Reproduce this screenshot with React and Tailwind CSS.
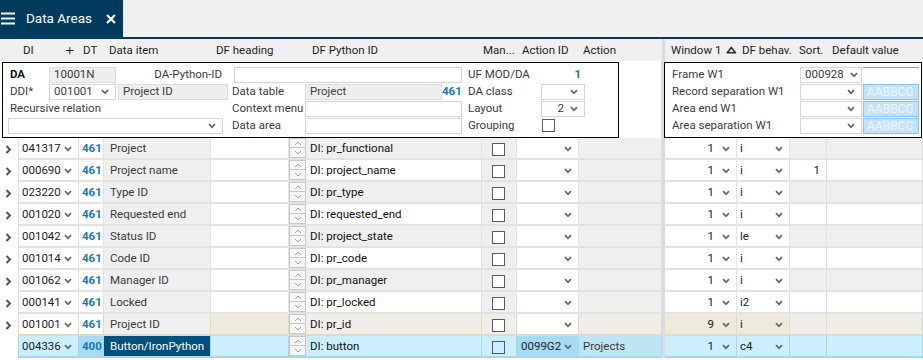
import React from 'react';

const cols = 'grid grid-cols-[18px_61px_25px_107px_78px_17px_176px_35px_62px_83px_3px_72px_53px_37px_96px]';

const rows = [
  { di: '041317', dt: '461', item: 'Project', py: 'DI: pr_functional', win: '1', beh: 'i' },
  { di: '000690', dt: '461', item: 'Project name', py: 'DI: project_name', win: '1', beh: 'i', sort: '1' },
  { di: '023220', dt: '461', item: 'Type ID', py: 'DI: pr_type', win: '1', beh: 'i' },
  { di: '001020', dt: '461', item: 'Requested end', py: 'DI: requested_end', win: '1', beh: 'i' },
  { di: '001042', dt: '461', item: 'Status ID', py: 'DI: project_state', win: '1', beh: 'le' },
  { di: '001014', dt: '461', item: 'Code ID', py: 'DI: pr_code', win: '1', beh: 'i' },
  { di: '001062', dt: '461', item: 'Manager ID', py: 'DI: pr_manager', win: '1', beh: 'i' },
  { di: '000141', dt: '461', item: 'Locked', py: 'DI: pr_locked', win: '1', beh: 'i2' },
  { di: '001001', dt: '461', item: 'Project ID', py: 'DI: pr_id', win: '9', beh: 'i', tone: 'beige' },
  { di: '004336', dt: '400', item: 'Button/IronPython', py: 'DI: button', actId: '0099G2', action: 'Projects', win: '1', beh: 'c4', tone: 'sel' },
];

const ChevronDown = () => (
  <svg width="8" height="6" viewBox="0 0 8 6" className="shrink-0">
    <path d="M1 1.2L4 4.3L7 1.2" fill="none" stroke="#666" strokeWidth="1.8" />
  </svg>
);

const RowArrow = () => (
  <svg width="7" height="9" viewBox="0 0 7 9">
    <path d="M1.5 1L5 4.5L1.5 8" fill="none" stroke="#555" strokeWidth="2" />
  </svg>
);

const Checkbox = ({ sel }) => (
  <div className={`w-[13px] h-[13px] border border-[#5a5a5a] ${sel ? 'bg-[#ccefff]' : 'bg-white'}`} />
);

const Spinner = ({ line }) => (
  <div className={`h-[22px] flex flex-col border-b-2 ${line}`}>
    <div className="h-[10px] border border-[#c9c9c9] bg-[#f6f6f6] flex items-center justify-center">
      <svg width="8" height="5" viewBox="0 0 8 5"><path d="M1 4L4 1L7 4" fill="none" stroke="#a8a8a8" strokeWidth="1" /></svg>
    </div>
    <div className="h-[10px] border border-t-0 border-[#c9c9c9] bg-[#f6f6f6] flex items-center justify-center">
      <svg width="8" height="5" viewBox="0 0 8 5"><path d="M1 1L4 4L7 1" fill="none" stroke="#a8a8a8" strokeWidth="1" /></svg>
    </div>
  </div>
);

function DataRow({ r, i }) {
  const sel = r.tone === 'sel';
  const beige = r.tone === 'beige';
  const line = sel ? 'border-[#a9d6ec]' : beige ? 'border-[#e3dbbd]' : 'border-[#e2e2e2]';
  const white = sel ? 'bg-[#ccefff]' : 'bg-white';
  const gray = sel ? 'bg-[#ccefff]' : beige ? 'bg-[#efeee8]' : 'bg-[#efefef]';
  const alt = i % 2 === 0 ? gray : white;
  const warm = sel ? 'bg-[#ccefff]' : beige ? 'bg-[#efebdc]' : 'bg-white';
  const dark = sel ? 'bg-[#a6dcf6]' : 'bg-white';
  const cell = `h-[22px] pt-[2px] flex items-center border-r border-b-2 ${line}`;

  return (
    <div className={cols}>
      <div className="h-[22px] pt-[1px] flex items-center pl-[5px]">{!sel && <RowArrow />}</div>
      <div className={`${cell} border-l ${white} pl-[3px] pr-[6px] justify-between`}>
        <span>{r.di}</span>
        <ChevronDown />
      </div>
      <div className={`${cell} ${dark} pl-[3px] font-bold text-[#1777b5]`}>{r.dt}</div>
      <div className={`${cell} ${sel ? 'bg-[#004f7c] text-white' : 'bg-[#efefef] text-[#3a3a3a]'} pl-[6px]`}>{r.item}</div>
      <div className={`${cell} ${warm}`} />
      <Spinner line={line} />
      <div className={`${cell} ${alt} pl-[4px] text-[#111]`}>{r.py}</div>
      <div className={`${cell} ${gray} pl-[10px]`}>
        <Checkbox sel={sel} />
      </div>
      <div className={`${cell} ${dark} pl-[4px] pr-[6px] justify-between`}>
        <span>{r.actId || ''}</span>
        <ChevronDown />
      </div>
      <div className={`${cell} ${sel ? 'bg-[#bde5f4]' : gray} pl-[4px] text-[#3a3a3a]`}>{r.action || ''}</div>
      <div className="h-[22px] bg-[#dedae2]" />
      <div className={`${cell} ${warm} justify-end pr-[6px] gap-[8px]`}>
        <span>{r.win}</span>
        <ChevronDown />
      </div>
      <div className={`${cell} ${warm} pl-[3px] pr-[6px] justify-between`}>
        <span>{r.beh}</span>
        <ChevronDown />
      </div>
      <div className={`${cell} ${alt} justify-end pr-[6px]`}>{r.sort || ''}</div>
      <div className={`${cell} ${alt}`} />
    </div>
  );
}

const Field = ({ w, gray, children, className = '' }) => (
  <div className={`${w} h-[16px] flex items-center px-[4px] border ${gray ? 'bg-[#eeeeee] border-[#dedede]' : 'bg-white border-[#d6d6d6]'} ${className}`}>
    {children}
  </div>
);

const Select = ({ w, value, right, className = '' }) => (
  <div className={`${w} h-[16px] flex items-center pl-[4px] pr-[6px] gap-[6px] border border-[#d6d6d6] bg-white ${className}`}>
    <span className={right ? 'ml-auto' : 'flex-1'}>{value}</span>
    <ChevronDown />
  </div>
);

const Swatch = () => (
  <div className="ml-[1px] w-[56px] h-[16px] flex items-center pl-[3px] bg-[#c3e3fb] border border-[#86c3ee] text-[#eef7ff] text-[12px]">AABBCC</div>
);

export default function App() {
  return (
    <div className="w-[923px] h-[360px] overflow-hidden bg-white text-[11.5px] text-[#222] font-['Roboto','Liberation_Sans',sans-serif]">
      {/* tab bar */}
      <div className="flex h-[37px] bg-[#f0f0f0]">
        <div className="flex items-center w-[123px] bg-[#003a5c] text-white">
          <svg width="15" height="13" viewBox="0 0 15 13" className="ml-[1px]">
            <path d="M0 1.5H14M0 6.5H14M0 11.5H14" stroke="#fff" strokeWidth="2" />
          </svg>
          <span className="ml-[10px] text-[13.5px]">Data Areas</span>
          <svg width="10" height="10" viewBox="0 0 10 10" className="ml-[14px]">
            <path d="M1 1L9 9M9 1L1 9" stroke="#fff" strokeWidth="2.2" />
          </svg>
        </div>
      </div>
      <div className="h-[2px] bg-[#003a5c]" />

      {/* column header */}
      <div className={`${cols} h-[22px] bg-[#f0f0f0] text-[#1e1e1e] whitespace-nowrap`}>
        <div />
        <div className="flex items-center pl-[5px]">
          DI<span className="ml-auto mr-[5px] text-[15px] font-light">+</span>
        </div>
        <div className="flex items-center pl-[4px]">DT</div>
        <div className="flex items-center pl-[5px]">Data item</div>
        <div className="flex items-center pl-[5px]">DF heading</div>
        <div />
        <div className="flex items-center pl-[6px]">DF Python ID</div>
        <div className="flex items-center pl-[1px]">Man...</div>
        <div className="flex items-center pl-[5px]">Action ID</div>
        <div className="flex items-center pl-[4px]">Action</div>
        <div className="bg-[#dedae2]" />
        <div className="flex items-center pl-[6px] gap-[5px]">
          Window 1
          <svg width="11" height="8" viewBox="0 0 11 8">
            <path d="M1.2 6.8L5.5 1.3L9.8 6.8Z" fill="#d8d8d8" stroke="#2a2a2a" strokeWidth="1.6" strokeLinejoin="round" />
          </svg>
        </div>
        <div className="flex items-center pl-[5px]">DF behav.</div>
        <div className="flex items-center pl-[9px]">Sort.</div>
        <div className="flex items-center pl-[5px]">Default value</div>
      </div>

      {/* detail panel */}
      <div className="flex items-start h-[77px] text-[#3c3c3c] whitespace-nowrap">
        <div className="ml-[2px] mt-[1px] w-[617px] h-[76px] border border-black pt-[3px]">
          <div className="flex items-center h-[17px]">
            <span className="w-[46px] pl-[7px] font-bold text-[#111]">DA</span>
            <Field w="w-[67px]" gray>10001N</Field>
            <span className="w-[112px] text-right pr-[6px]">DA-Python-ID</span>
            <Field w="w-[228px] ml-[6px]" />
            <span className="ml-[6px] w-[72px]">UF MOD/DA</span>
            <span className="w-[41px] text-right font-bold text-[#1777b5]">1</span>
          </div>
          <div className="flex items-center h-[17px]">
            <span className="w-[46px] pl-[7px]">DDI*</span>
            <Select w="w-[67px]" value="001001" />
            <Field w="w-[110px] ml-[2px]" gray>Project ID</Field>
            <span className="ml-[4px] w-[73px]">Data table</span>
            <Field w="w-[137px]" gray>Project</Field>
            <span className="w-[19px] text-right font-bold text-[#1777b5]">461</span>
            <span className="ml-[7px] w-[73px]">DA class</span>
            <Select w="w-[44px]" value="" />
          </div>
          <div className="flex items-center h-[17px]">
            <span className="w-[229px] pl-[7px]">Recursive relation</span>
            <span className="w-[73px]">Context menu</span>
            <Field w="w-[157px]" />
            <span className="ml-[6px] w-[73px]">Layout</span>
            <Select w="w-[44px]" value="2" right />
          </div>
          <div className="flex items-center h-[17px]">
            <Select w="w-[215px] ml-[5px]" value="" />
            <span className="ml-[9px] w-[73px]">Data area</span>
            <Field w="w-[157px]" />
            <span className="ml-[6px] w-[73px]">Grouping</span>
            <div className="ml-[1px]"><Checkbox /></div>
          </div>
        </div>
        <div className="w-[42px]" />
        <div className="w-[3px] h-[77px] bg-[#dedae2]" />
        <div className="mt-[1px] w-[258px] h-[76px] border border-black pt-[3px]">
          <div className="flex items-center h-[17px]">
            <span className="w-[135px] pl-[7px]">Frame W1</span>
            <Select w="w-[62px]" value="000928" />
            <div className="ml-[1px] w-[56px] h-[16px] border-t border-[#5aa8e0] bg-white" />
          </div>
          <div className="flex items-center h-[17px]">
            <span className="w-[135px] pl-[7px]">Record separation W1</span>
            <Select w="w-[62px]" value="" />
            <Swatch />
          </div>
          <div className="flex items-center h-[17px]">
            <span className="w-[135px] pl-[7px]">Area end W1</span>
            <Select w="w-[62px]" value="" />
            <Swatch />
          </div>
          <div className="flex items-center h-[17px]">
            <span className="w-[135px] pl-[7px]">Area separation W1</span>
            <Select w="w-[62px]" value="" />
            <Swatch />
          </div>
        </div>
      </div>

      {/* data item rows */}
      <div>
        {rows.map((r, i) => (
          <DataRow key={r.di + i} r={r} i={i} />
        ))}
      </div>
    </div>
  );
}
